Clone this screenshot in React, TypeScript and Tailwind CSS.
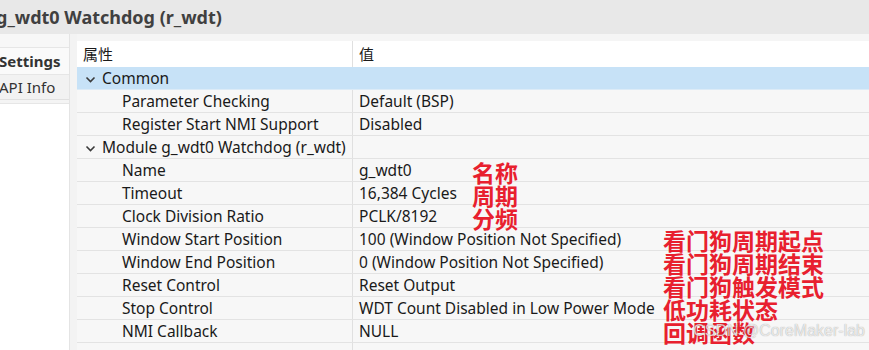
import React from 'react';

type Row = { label: string; value?: string; group?: boolean; selected?: boolean };

const rows: Row[] = [
  { label: 'Common', group: true, selected: true },
  { label: 'Parameter Checking', value: 'Default (BSP)' },
  { label: 'Register Start NMI Support', value: 'Disabled' },
  { label: 'Module g_wdt0 Watchdog (r_wdt)', group: true },
  { label: 'Name', value: 'g_wdt0' },
  { label: 'Timeout', value: '16,384 Cycles' },
  { label: 'Clock Division Ratio', value: 'PCLK/8192' },
  { label: 'Window Start Position', value: '100 (Window Position Not Specified)' },
  { label: 'Window End Position', value: '0 (Window Position Not Specified)' },
  { label: 'Reset Control', value: 'Reset Output' },
  { label: 'Stop Control', value: 'WDT Count Disabled in Low Power Mode' },
  { label: 'NMI Callback', value: 'NULL' },
  { label: '', value: '' },
];

const Chevron = () => (
  <svg width="11" height="11" viewBox="0 0 11 11" className="shrink-0">
    <path d="M1.5 3.5 L5.5 7.5 L9.5 3.5" fill="none" stroke="#3a3a3a" strokeWidth="1.6" />
  </svg>
);

const font = { fontFamily: '"Noto Sans", "Noto Sans CJK SC", sans-serif' };

export default function App() {
  return (
    <div
      className="relative w-[869px] h-[350px] overflow-hidden bg-[#f5f5f5] text-[#1a1a1a]"
      style={font}
    >
      {/* title */}
      <div className="h-[34px] bg-[#e8e8e8] flex items-center">
        <span className="-ml-[4px] text-[18px] font-bold text-[#404040] leading-none">
          g_wdt0 Watchdog (r_wdt)
        </span>
      </div>

      <div className="flex h-[316px]">
        {/* side tabs */}
        <div className="w-[70px] shrink-0 bg-white border-r border-[#e4e4e4] flex flex-col">
          <div className="h-[13px] bg-[#f7f7f7]" />
          <div className="h-[28px] bg-[#fafafa] border-y border-[#e6e6e6] flex items-center text-[15px] font-bold text-[#333] leading-none -ml-[1px]">
            Settings
          </div>
          <div className="h-[25px] bg-[#f2f2f2] border-b border-[#e0e0e0] flex items-center text-[15px] text-[#333] leading-none -ml-[1px]">
            API Info
          </div>
          <div className="h-[4px] border-b border-[#e6e6e6] bg-[#f4f4f4]" />
        </div>
        <div className="w-[7px] shrink-0 bg-[#f3f3f3]" />

        {/* property table */}
        <div className="flex-1 pt-[7px] bg-[#f5f5f5]">
          <div className="h-[26px] bg-white flex text-[15px] leading-none">
            <div className="w-[276px] shrink-0 flex items-center pl-[6px] border-r border-[#e0e0e0]">属性</div>
            <div className="flex-1 flex items-center pl-[6px]">值</div>
          </div>
          {rows.map((r, i) => (
            <div
              key={i}
              className={`h-[23px] flex text-[15.5px] leading-none border-b ${
                r.selected ? 'bg-[#c7e2f7] border-[#dcebf7]' : 'bg-[#f7f7f7] border-[#e3e3e3]'
              }`}
            >
              <div
                className={`w-[276px] shrink-0 flex items-center pt-[2px] border-r ${
                  r.selected ? 'border-[#c7e2f7]' : 'border-[#e0e0e0]'
                } ${r.group ? 'pl-[8px] gap-[6px]' : 'pl-[45px]'}`}
              >
                {r.group && <Chevron />}
                <span className="whitespace-nowrap">{r.label}</span>
              </div>
              <div className="flex-1 flex items-center pt-[2px] pl-[6px] whitespace-nowrap">{r.value}</div>
            </div>
          ))}
        </div>
      </div>

      {/* red annotations */}
      <div
        className="absolute left-[472px] top-[161px] flex flex-col text-[23px] leading-[23px] font-bold text-[#e8202e]"
        style={{ fontFamily: '"Noto Sans CJK SC", sans-serif' }}
      >
        <span>名称</span>
        <span>周期</span>
        <span>分频</span>
      </div>
      <div
        className="absolute left-[663px] top-[229px] flex flex-col text-[23px] leading-[23px] font-bold text-[#e8202e]"
        style={{ fontFamily: '"Noto Sans CJK SC", sans-serif' }}
      >
        <span>看门狗周期起点</span>
        <span>看门狗周期结束</span>
        <span>看门狗触发模式</span>
        <span>低功耗状态</span>
        <span>回调函数</span>
      </div>

      {/* watermark */}
      <div
        className="absolute right-[4px] top-[323px] text-[16px] leading-none text-white/75 whitespace-nowrap [text-shadow:0_0_1px_rgba(0,0,0,0.4)]"
        style={{ fontFamily: '"Liberation Sans", sans-serif' }}
      >
        CSDN @CoreMaker-lab
      </div>
    </div>
  );
}
